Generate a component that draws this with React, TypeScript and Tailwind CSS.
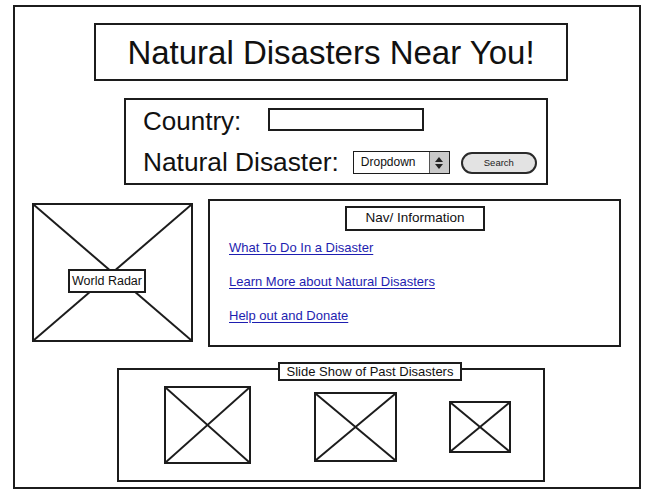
function XBox({ className }: { className: string }) {
  return (
    <div className={`border-2 border-[#1c1c1c] bg-white ${className}`}>
      <svg className="block h-full w-full" viewBox="0 0 100 100" preserveAspectRatio="none">
        <line x1="0" y1="0" x2="100" y2="100" stroke="#1c1c1c" strokeWidth="2" vectorEffect="non-scaling-stroke" />
        <line x1="100" y1="0" x2="0" y2="100" stroke="#1c1c1c" strokeWidth="2" vectorEffect="non-scaling-stroke" />
      </svg>
    </div>
  );
}

const links = ["What To Do In a Disaster", "Learn More about Natural Disasters", "Help out and Donate"];

export default function App() {
  return (
    <div className="h-[495px] w-[653px] overflow-hidden bg-white pt-[5px] pl-[13px] font-['Liberation_Sans',Arial,sans-serif] text-[#111]">
      <div className="h-[484px] w-[628px] border-2 border-[#1c1c1c]">
        {/* title */}
        <div className="ml-[79px] mt-[16px] flex h-[58px] w-[474px] items-center justify-center border-2 border-[#1c1c1c]">
          <span className="text-[33px] leading-none">Natural Disasters Near You!</span>
        </div>

        {/* search */}
        <div className="ml-[109px] mt-[17px] h-[87px] w-[424px] border-2 border-[#1c1c1c] pl-[17px] pt-[6px]">
          <div className="flex items-start">
            <span className="w-[125px] text-[26px] leading-[30px]">Country:</span>
            <div className="mt-[2px] h-[23px] w-[156px] border-2 border-[#1c1c1c]" />
          </div>
          <div className="mt-[11px] flex items-start">
            <span className="text-[26.3px] leading-[30px]">Natural Disaster:</span>
            <div className="ml-[14px] mt-[4px] flex h-[23px] w-[97px] border-[1.5px] border-[#1c1c1c]">
              <span className="flex-1 pl-[7px] text-[12px] leading-[20px]">Dropdown</span>
              <div className="flex w-[20px] flex-col items-center justify-center border-l border-[#555] bg-[#c9c9c9]">
                <svg width="10" height="14" viewBox="0 0 10 14">
                  <path d="M5 1 L9 6 H1 Z" fill="#222" />
                  <path d="M5 13 L9 8 H1 Z" fill="#222" />
                </svg>
              </div>
            </div>
            <div className="ml-[11px] mt-[5px] flex h-[22px] w-[76px] items-center justify-center rounded-full border-2 border-[#2a2a2a] bg-[#e3e3e3]">
              <span className="text-[9.5px] text-[#222]">Search</span>
            </div>
          </div>
        </div>

        {/* radar + nav */}
        <div className="mt-[14px] flex items-start">
          <div className="relative ml-[17px] mt-[4px]">
            <XBox className="h-[139px] w-[161px]" />
            <div className="absolute left-[36px] top-[66px] flex h-[24px] w-[78px] items-center justify-center border-2 border-[#1c1c1c] bg-white">
              <span className="whitespace-nowrap text-[12.5px]">World Radar</span>
            </div>
          </div>
          <div className="ml-[15px] h-[148px] w-[413px] border-2 border-[#1c1c1c]">
            <div className="ml-[135px] mt-[5px] flex h-[25px] w-[140px] items-center justify-center border-2 border-[#1c1c1c]">
              <span className="whitespace-nowrap text-[13.5px]">Nav/ Information</span>
            </div>
            <div className="mt-[9px] flex flex-col gap-[18px] pl-[19px]">
              {links.map((l) => (
                <a key={l} href="#" className="w-fit text-[13px] leading-[16px] text-[#1e1eb0] underline underline-offset-2">
                  {l}
                </a>
              ))}
            </div>
          </div>
        </div>

        {/* slideshow */}
        <div className="relative ml-[102px] mt-[21px] flex h-[114px] w-[428px] items-center border-2 border-[#1c1c1c] pl-[45px]">
          <div className="absolute left-[159px] top-[-8px] flex h-[19px] w-[184px] items-center justify-center border-2 border-[#1c1c1c] bg-white">
            <span className="whitespace-nowrap text-[13px]">Slide Show of Past Disasters</span>
          </div>
          <XBox className="h-[78px] w-[87px]" />
          <XBox className="ml-[63px] mt-[4px] h-[70px] w-[83px]" />
          <XBox className="ml-[52px] mt-[4px] h-[52px] w-[62px]" />
        </div>
      </div>
    </div>
  );
}
